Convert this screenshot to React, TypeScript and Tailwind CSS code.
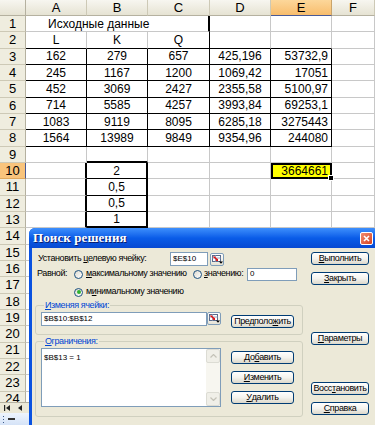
import React from 'react';

const GRID = 'border-r border-b border-[#c8c8c8]';
const BLACK = 'border-r border-b border-black';
const colW = ['w-[61px]', 'w-[61px]', 'w-[62px]', 'w-[61px]', 'w-[61px]', 'flex-1'];

const tableRows = [
  ['162', '279', '657', '425,196', '53732,9'],
  ['245', '1167', '1200', '1069,42', '17051'],
  ['452', '3069', '2427', '2355,58', '5100,97'],
  ['714', '5585', '4257', '3993,84', '69253,1'],
  ['1083', '9119', '8095', '6285,18', '3275443'],
  ['1564', '13989', '9849', '9354,96', '244080'],
];

const Cell = ({ w, cls = GRID, align = 'justify-center', children }: { w: string; cls?: string; align?: string; children?: React.ReactNode }) => (
  <div className={`${w} ${cls} ${align} box-border flex items-center overflow-hidden whitespace-nowrap`}>{children}</div>
);

const Row = ({ n, hl = false, children }: { n: number; hl?: boolean; children: React.ReactNode }) => (
  <div className="flex h-[16.33px] shrink-0">
    <div
      className={`w-[26px] shrink-0 box-border flex items-center justify-center text-[13px] border-b border-r ${
        hl ? 'bg-[#f9c47c] border-b-[#e0a85c] border-r-[#4a5a96]' : 'bg-[#efeddf] border-b-[#cdc9b6] border-r-[#b5b1a0]'
      }`}
    >
      {n}
    </div>
    {children}
  </div>
);

const emptyCells = (from: number) => colW.slice(from).map((w, i) => <Cell key={from + i} w={w} />);

const RefButton = ({ className = '' }: { className?: string }) => (
  <div className={`w-[14px] h-[13px] shrink-0 box-border rounded-[2px] border border-[#7f9db9] bg-gradient-to-b from-white to-[#e6e3d6] flex items-center justify-center ${className}`}>
    <svg width="11" height="9" viewBox="0 0 11 9">
      <rect x="0.5" y="0.5" width="8" height="6" fill="#fff" stroke="#5a6b8c" />
      <line x1="0.5" y1="3" x2="8.5" y2="3" stroke="#9aa6c0" />
      <line x1="3.5" y1="0.5" x2="3.5" y2="6.5" stroke="#9aa6c0" />
      <path d="M1.5 1.5 L5.5 5" stroke="#e01010" strokeWidth="1.6" />
      <path d="M6 3.5 L6 6 L3.5 6 Z" fill="#e01010" />
      <path d="M7 6.5 L11 6.5 L9 8.8 Z" fill="#000" />
    </svg>
  </div>
);

const Radio = ({ on = false }: { on?: boolean }) => (
  <div className="w-[9px] h-[9px] shrink-0 box-border rounded-full border border-[#1c5180] bg-gradient-to-br from-[#dcdad0] to-white flex items-center justify-center">
    {on && <div className="w-[4px] h-[4px] rounded-full bg-[#2fb12f]" />}
  </div>
);

const btn =
  'h-[13px] box-border rounded-[3px] border border-[#003c74] bg-gradient-to-b from-white via-[#f4f3ee] to-[#dcd8cb] flex items-center justify-center text-[9px] leading-none text-black whitespace-nowrap';

const Dialog = () => (
  <div className="absolute left-[29px] top-[228px] w-[349px] h-[200px] rounded-t-[6px] bg-[#0a52e0] overflow-hidden font-['Liberation_Sans',Arial,sans-serif]">
    <div className="h-[20px] flex items-center justify-between bg-gradient-to-b from-[#3d8ffc] via-[#0a5ce8] to-[#0749d2] pl-[4px] pr-[5px]">
      <span className="text-white font-bold text-[13px] font-['Liberation_Serif',serif] tracking-[0.1px] [text-shadow:1px_1px_0_#0a1e6e]">Поиск решения</span>
      <div className="w-[13px] h-[13px] box-border rounded-[2px] border border-white bg-gradient-to-br from-[#f08a6e] to-[#d6401c] flex items-center justify-center">
        <svg width="7" height="7" viewBox="0 0 7 7">
          <path d="M1 1 L6 6 M6 1 L1 6" stroke="#fff" strokeWidth="1.6" />
        </svg>
      </div>
    </div>
    <div className="ml-[3px] h-[180px] bg-[#ece9d8] flex pl-[3px] text-[9px] tracking-[-0.4px] whitespace-nowrap text-black">
      {/* left column */}
      <div className="w-[268px] pt-[4px]">
        <div className="flex items-center h-[14px]">
          <span className="w-[135px] pl-[3px]">Установить <u>ц</u>елевую ячейку:</span>
          <div className="w-[38px] h-[14px] box-border bg-white border border-[#7f9db9] flex items-center pl-[2px] text-[8px] tracking-normal">$E$10</div>
          <RefButton className="ml-[2px]" />
        </div>
        <div className="flex items-center h-[16px]">
          <span className="w-[39px] pl-[2px]">Равной:</span>
          <Radio />
          <span className="w-[110px] pl-[3px]"><u>м</u>аксимальному значению</span>
          <Radio />
          <span className="w-[45px] pl-[2px]"><u>з</u>начению:</span>
          <div className="w-[50px] h-[13px] box-border bg-white border border-[#7f9db9] flex items-center pl-[2px] text-[8px]">0</div>
        </div>
        <div className="flex items-center h-[12px] mt-[4px] pl-[39px]">
          <Radio on />
          <span className="pl-[3px]">м<u>и</u>нимальному значению</span>
        </div>
        <fieldset className="mt-[2px] box-border border border-[#d0d0bf] rounded-[3px] px-[5px] pb-[6px]">
          <legend className="ml-[3px] px-[1px] text-[#0046d5] leading-[11px]"><u>И</u>зменяя ячейки:</legend>
          <div className="flex items-start pt-[1px]">
            <div className="w-[166px] h-[14px] box-border bg-white border border-[#7f9db9] flex items-center pl-[2px] text-[8px] tracking-normal">$B$10:$B$12</div>
            <RefButton />
            <div className={`${btn} w-[63px] ml-[10px] mt-[3px]`}>Предполо<u>ж</u>ить</div>
          </div>
        </fieldset>
        <fieldset className="mt-[1px] box-border border border-[#d0d0bf] rounded-[3px] px-[5px] pb-[9px]">
          <legend className="ml-[3px] px-[1px] text-[#0046d5] leading-[11px]"><u>О</u>граничения:</legend>
          <div className="flex items-start pt-[1px]">
            <div className="w-[180px] h-[59px] box-border bg-white border border-[#7f9db9] flex">
              <div className="flex-1 pl-[2px] pt-[3px] text-[8px] tracking-normal">$B$13 = 1</div>
              <div className="w-[14px] flex flex-col justify-between bg-[#f7f6f0]">
                <div className="h-[14px] box-border border border-[#dcdcd4] rounded-[2px] bg-[#f0efe8] flex items-center justify-center">
                  <svg width="7" height="4" viewBox="0 0 7 4"><path d="M0.5 3.5 L3.5 0.5 L6.5 3.5" fill="none" stroke="#c4c2b8" strokeWidth="1.2" /></svg>
                </div>
                <div className="h-[14px] box-border border border-[#dcdcd4] rounded-[2px] bg-[#f0efe8] flex items-center justify-center">
                  <svg width="7" height="4" viewBox="0 0 7 4"><path d="M0.5 0.5 L3.5 3.5 L6.5 0.5" fill="none" stroke="#c4c2b8" strokeWidth="1.2" /></svg>
                </div>
              </div>
            </div>
            <div className="ml-[10px] pt-[3px] flex flex-col gap-[7px]">
              <div className={`${btn} w-[63px]`}>До<u>б</u>авить</div>
              <div className={`${btn} w-[63px]`}><u>И</u>зменить</div>
              <div className={`${btn} w-[63px]`}><u>У</u>далить</div>
            </div>
          </div>
        </fieldset>
      </div>
      {/* right column */}
      <div className="ml-[8px] w-[58px] pt-[4px] flex flex-col">
        <div className={btn}><u>В</u>ыполнить</div>
        <div className={`${btn} mt-[7px]`}><u>З</u>акрыть</div>
        <div className={`${btn} mt-[47px]`}><u>П</u>араметры</div>
        <div className={`${btn} mt-[37px]`}>Восс<u>т</u>ановить</div>
        <div className={`${btn} mt-[7px]`}><u>С</u>правка</div>
      </div>
    </div>
  </div>
);

export default function App() {
  return (
    <div className="relative w-[375px] h-[425px] overflow-hidden bg-white text-black font-['Liberation_Sans',Arial,sans-serif]">
      {/* column headers */}
      <div className="flex h-[16px] text-[13px]">
        <div className="w-[26px] box-border border-r border-b border-[#b5b1a0] bg-gradient-to-b from-[#f7f6f0] to-[#e6e3d3]" />
        {['A', 'B', 'C', 'D', 'E', 'F'].map((l, i) =>
          l === 'E' ? (
            <div key={l} className={`${colW[i]} box-border flex items-center justify-center border-r border-r-[#c9a46a] border-b border-b-[#4a5a96] bg-gradient-to-b from-[#fcd79a] to-[#f8bd6c]`}>{l}</div>
          ) : (
            <div key={l} className={`${colW[i]} box-border flex items-center justify-center border-r border-r-[#cdc9b6] border-b border-b-[#b5b1a0] bg-gradient-to-b from-[#f7f6f0] to-[#e6e3d3]`}>{l}</div>
          )
        )}
      </div>

      <div className="h-[386px] overflow-hidden flex flex-col text-[12px]">
        <Row n={1}>
          <Cell w="w-[184px]" cls="border-r-2 border-r-black border-b border-b-[#c8c8c8]" align="justify-start pl-[22px]">Исходные данные</Cell>
          {emptyCells(3)}
        </Row>
        <Row n={2}>
          <Cell w={colW[0]} cls="border-r border-r-[#c8c8c8] border-b border-b-black">L</Cell>
          <Cell w={colW[1]} cls="border-r border-r-[#c8c8c8] border-b border-b-black">K</Cell>
          <Cell w={colW[2]} cls={BLACK}>Q</Cell>
          <Cell w={colW[3]} cls="border-r border-r-[#c8c8c8] border-b border-b-black" />
          <Cell w={colW[4]} cls="border-r border-r-[#c8c8c8] border-b border-b-black" />
          <Cell w={colW[5]} />
        </Row>
        {tableRows.map((r, i) => (
          <Row key={i} n={i + 3}>
            <Cell w={colW[0]} cls={BLACK}>{r[0]}</Cell>
            <Cell w={colW[1]} cls={BLACK}>{r[1]}</Cell>
            <Cell w={colW[2]} cls={BLACK}>{r[2]}</Cell>
            <Cell w={colW[3]} cls={BLACK}>{r[3]}</Cell>
            <Cell w={colW[4]} cls={BLACK} align="justify-end pr-[3px]">{r[4]}</Cell>
            <Cell w={colW[5]} />
          </Row>
        ))}
        <Row n={9}>
          <Cell w={colW[0]} />
          <Cell w={colW[1]} cls="border-r border-r-[#c8c8c8] border-b-2 border-b-black" />
          {emptyCells(2)}
        </Row>
        {['2', '0,5', '0,5', '1'].map((v, i) => (
          <Row key={v + i} n={10 + i} hl={i === 0}>
            <Cell w={colW[0]} cls="border-r-2 border-r-black border-b border-b-[#c8c8c8]" />
            <Cell w={colW[1]} cls={i === 3 ? 'border-r-2 border-r-black border-b-2 border-b-black' : 'border-r-2 border-r-black border-b border-b-black'}>{v}</Cell>
            <Cell w={colW[2]} />
            <Cell w={colW[3]} />
            {i === 0 ? (
              <div className={`${colW[4]} relative z-10 box-border border-2 border-black bg-[#ffff00] flex items-center justify-end pr-[2px]`}>
                3664661
                <div className="absolute -right-[4px] -bottom-[4px] w-[6px] h-[6px] box-border bg-black border border-white" />
              </div>
            ) : (
              <Cell w={colW[4]} />
            )}
            <Cell w={colW[5]} />
          </Row>
        ))}
        {Array.from({ length: 11 }, (_, i) => (
          <Row key={14 + i} n={14 + i}>{emptyCells(0)}</Row>
        ))}
      </div>

      {/* sheet tab navigation */}
      <div className="h-[11px] bg-[#ece9d8] border-t border-[#b5b1a0] flex items-center gap-[8px] pl-[4px]">
        <svg width="6" height="6" viewBox="0 0 6 6"><rect x="0" y="0" width="1.2" height="6" fill="#222" /><path d="M6 0 L6 6 L2 3 Z" fill="#222" /></svg>
        <svg width="5" height="6" viewBox="0 0 5 6"><path d="M4 0 L4 6 L0 3 Z" fill="#222" /></svg>
      </div>
      <div className="h-[12px] bg-gradient-to-b from-[#eef4fd] to-[#d5e3f7] flex items-center gap-[4px] pl-[3px]">
        <div className="flex flex-col gap-[2px]">
          <div className="w-[1px] h-[1px] bg-[#3c5a8a]" />
          <div className="w-[1px] h-[1px] bg-[#3c5a8a]" />
          <div className="w-[1px] h-[1px] bg-[#3c5a8a]" />
        </div>
        <div className="w-[7px] h-[2px] bg-[#333]" />
      </div>

      <Dialog />
    </div>
  );
}
